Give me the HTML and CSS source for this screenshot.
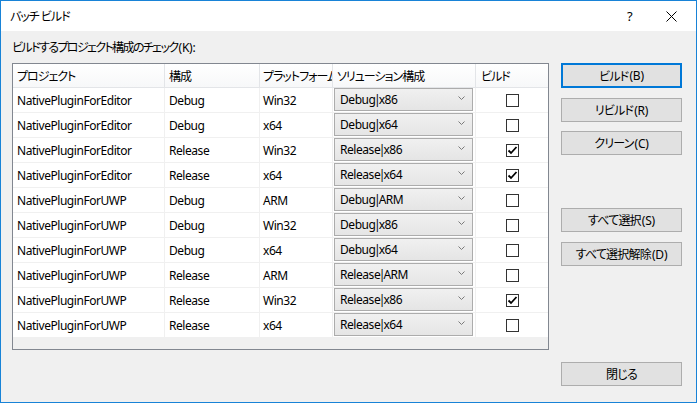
FILE: index.html
```html
<!DOCTYPE html>
<html lang="ja">
<head>
<meta charset="utf-8">
<link rel="stylesheet" href="styles.css">
</head>
<body>
<div class="window">
  <div class="titlebar">
    <span class="title">バッチ ビルド</span>
    <span class="help">?</span>
    <span class="close"><svg width="11" height="11" viewBox="0 0 11 11"><path d="M0.5 0.5 L10.5 10.5 M10.5 0.5 L0.5 10.5" stroke="#000" stroke-width="1" fill="none"/></svg></span>
  </div>
  <div class="content">
    <div class="left">
      <div class="label">ビルドするプロジェクト構成のチェック<span class="lat">(K):</span></div>
      <div class="grid">
        <div class="row head">
          <div class="c c1">プロジェクト</div>
          <div class="c c2">構成</div>
          <div class="c c3">プラットフォーム</div>
          <div class="c c4">ソリューション構成</div>
          <div class="c c5">ビルド</div>
        </div>
        <div class="row">
          <div class="c c1">NativePluginForEditor</div><div class="c c2">Debug</div><div class="c c3">Win32</div>
          <div class="c c4"><div class="combo"><span>Debug<i>|</i>x86</span><svg class="chev" width="7" height="4" viewBox="0 0 7 4"><path d="M0.5 0.5 L3.5 3.5 L6.5 0.5" stroke="#7a7a7a" fill="none"/></svg></div></div>
          <div class="c c5"><span class="cb"></span></div>
        </div>
        <div class="row">
          <div class="c c1">NativePluginForEditor</div><div class="c c2">Debug</div><div class="c c3">x64</div>
          <div class="c c4"><div class="combo"><span>Debug<i>|</i>x64</span><svg class="chev" width="7" height="4" viewBox="0 0 7 4"><path d="M0.5 0.5 L3.5 3.5 L6.5 0.5" stroke="#7a7a7a" fill="none"/></svg></div></div>
          <div class="c c5"><span class="cb"></span></div>
        </div>
        <div class="row">
          <div class="c c1">NativePluginForEditor</div><div class="c c2">Release</div><div class="c c3">Win32</div>
          <div class="c c4"><div class="combo"><span>Release<i>|</i>x86</span><svg class="chev" width="7" height="4" viewBox="0 0 7 4"><path d="M0.5 0.5 L3.5 3.5 L6.5 0.5" stroke="#7a7a7a" fill="none"/></svg></div></div>
          <div class="c c5"><span class="cb"><svg width="11" height="11" viewBox="0 0 11 11"><path d="M1.5 5.5 L4 8 L9.5 2" stroke="#000" stroke-width="1.8" fill="none"/></svg></span></div>
        </div>
        <div class="row">
          <div class="c c1">NativePluginForEditor</div><div class="c c2">Release</div><div class="c c3">x64</div>
          <div class="c c4"><div class="combo"><span>Release<i>|</i>x64</span><svg class="chev" width="7" height="4" viewBox="0 0 7 4"><path d="M0.5 0.5 L3.5 3.5 L6.5 0.5" stroke="#7a7a7a" fill="none"/></svg></div></div>
          <div class="c c5"><span class="cb"><svg width="11" height="11" viewBox="0 0 11 11"><path d="M1.5 5.5 L4 8 L9.5 2" stroke="#000" stroke-width="1.8" fill="none"/></svg></span></div>
        </div>
        <div class="row">
          <div class="c c1">NativePluginForUWP</div><div class="c c2">Debug</div><div class="c c3">ARM</div>
          <div class="c c4"><div class="combo"><span>Debug<i>|</i>ARM</span><svg class="chev" width="7" height="4" viewBox="0 0 7 4"><path d="M0.5 0.5 L3.5 3.5 L6.5 0.5" stroke="#7a7a7a" fill="none"/></svg></div></div>
          <div class="c c5"><span class="cb"></span></div>
        </div>
        <div class="row">
          <div class="c c1">NativePluginForUWP</div><div class="c c2">Debug</div><div class="c c3">Win32</div>
          <div class="c c4"><div class="combo"><span>Debug<i>|</i>x86</span><svg class="chev" width="7" height="4" viewBox="0 0 7 4"><path d="M0.5 0.5 L3.5 3.5 L6.5 0.5" stroke="#7a7a7a" fill="none"/></svg></div></div>
          <div class="c c5"><span class="cb"></span></div>
        </div>
        <div class="row">
          <div class="c c1">NativePluginForUWP</div><div class="c c2">Debug</div><div class="c c3">x64</div>
          <div class="c c4"><div class="combo"><span>Debug<i>|</i>x64</span><svg class="chev" width="7" height="4" viewBox="0 0 7 4"><path d="M0.5 0.5 L3.5 3.5 L6.5 0.5" stroke="#7a7a7a" fill="none"/></svg></div></div>
          <div class="c c5"><span class="cb"></span></div>
        </div>
        <div class="row">
          <div class="c c1">NativePluginForUWP</div><div class="c c2">Release</div><div class="c c3">ARM</div>
          <div class="c c4"><div class="combo"><span>Release<i>|</i>ARM</span><svg class="chev" width="7" height="4" viewBox="0 0 7 4"><path d="M0.5 0.5 L3.5 3.5 L6.5 0.5" stroke="#7a7a7a" fill="none"/></svg></div></div>
          <div class="c c5"><span class="cb"></span></div>
        </div>
        <div class="row">
          <div class="c c1">NativePluginForUWP</div><div class="c c2">Release</div><div class="c c3">Win32</div>
          <div class="c c4"><div class="combo"><span>Release<i>|</i>x86</span><svg class="chev" width="7" height="4" viewBox="0 0 7 4"><path d="M0.5 0.5 L3.5 3.5 L6.5 0.5" stroke="#7a7a7a" fill="none"/></svg></div></div>
          <div class="c c5"><span class="cb"><svg width="11" height="11" viewBox="0 0 11 11"><path d="M1.5 5.5 L4 8 L9.5 2" stroke="#000" stroke-width="1.8" fill="none"/></svg></span></div>
        </div>
        <div class="row">
          <div class="c c1">NativePluginForUWP</div><div class="c c2">Release</div><div class="c c3">x64</div>
          <div class="c c4"><div class="combo"><span>Release<i>|</i>x64</span><svg class="chev" width="7" height="4" viewBox="0 0 7 4"><path d="M0.5 0.5 L3.5 3.5 L6.5 0.5" stroke="#7a7a7a" fill="none"/></svg></div></div>
          <div class="c c5"><span class="cb"></span></div>
        </div>
      </div>
    </div>
    <div class="buttons">
      <button class="btn focus">ビルド<span class="lat">(B)</span></button>
      <button class="btn b-rebuild">リビルド<span class="lat">(R)</span></button>
      <button class="btn b-clean">クリーン<span class="lat">(C)</span></button>
      <button class="btn b-all">すべて選択<span class="lat">(S)</span></button>
      <button class="btn b-none">すべて選択解除<span class="lat">(D)</span></button>
      <button class="btn b-close">閉じる</button>
    </div>
  </div>
</div>
</body>
</html>
```

FILE: styles.css
```css
* { box-sizing: border-box; }
html, body { margin: 0; padding: 0; }
body {
  width: 697px;
  height: 403px;
  overflow: hidden;
  font-family: "Noto Sans", "Noto Sans CJK JP", sans-serif;
  font-size: 12px;
  color: #000;
  font-feature-settings: "palt";
}
.window {
  width: 697px;
  height: 403px;
  border: 1px solid #1883d7;
  background: #f0f0f0;
  display: flex;
  flex-direction: column;
}
.titlebar {
  height: 30px;
  background: #fff;
  display: flex;
  align-items: center;
  padding-left: 9px;
}
.title { flex: 1; font-size: 12px; letter-spacing: -1px; }
.help { width: 14px; margin-right: 25px; font-size: 13px; }
.close { width: 11px; height: 11px; margin-right: 19px; display: flex; }
.content {
  flex: 1;
  display: flex;
  padding: 9px 14px 0 11px;
  gap: 12px;
}
.left { width: 537px; display: flex; flex-direction: column; }
.label { height: 16px; line-height: 16px; margin-bottom: 7px; letter-spacing: -1.6px; }
.lat { letter-spacing: -0.2px; }
.label .lat { margin-left: 1px; }
.grid {
  height: 287px;
  border: 1px solid #828790;
  background: #f0f0f0;
  display: flex;
  flex-direction: column;
}
.row {
  display: flex;
  height: 25px;
  background: #fff;
  border-bottom: 1px solid #f0f0f0;
  letter-spacing: -0.45px;
}
.row.head {
  height: 24px;
  background: linear-gradient(#fff, #f7f8f9);
  border-bottom: 1px solid #e3e5e8;
  letter-spacing: -1px;
}
.c {
  display: flex;
  align-items: center;
  padding-left: 4px;
  white-space: nowrap;
  overflow: hidden;
  border-right: 1px solid #f0f0f0;
}
.head .c { border-right: 1px solid #e3e5e8; }
.c1 { width: 152px; }
.c2 { width: 95px; }
.c3 { width: 73px; padding-left: 3px; }
.c4 { width: 143px; padding-left: 1px; align-items: flex-start; }
.head .c4 { align-items: center; padding-left: 4px; }
.c5 { width: 72px; border-right: none; justify-content: center; padding-left: 0; }
.head .c5 { justify-content: flex-start; padding-left: 5px; border-right: none; }
.combo {
  width: 139px;
  height: 23px;
  border: 1px solid #acacac;
  background: linear-gradient(#f0f0f0, #e5e5e5);
  display: flex;
  align-items: center;
  justify-content: space-between;
  padding: 0 7px 0 5px;
}
.combo i { font-style: normal; margin: 0 -1.5px; }
.chev { display: block; margin-top: -3px; }
.cb {
  width: 13px;
  height: 13px;
  border: 1px solid #333;
  background: #fff;
  display: flex;
  align-items: center;
  justify-content: center;
}
.buttons {
  width: 122px;
  display: flex;
  flex-direction: column;
  padding-top: 23px;
}
.btn {
  font: inherit;
  color: #000;
  height: 24px;
  padding: 0;
  background: #e1e1e1;
  border: 1px solid #adadad;
  border-radius: 0;
  display: flex;
  align-items: center;
  justify-content: center;
  letter-spacing: -0.8px;
}
.btn .lat { margin-left: 1px; }
.btn.focus { height: 25px; border: 2px solid #0078d7; }
.b-rebuild { margin-top: 10px; }
.b-clean { margin-top: 9px; }
.b-all { margin-top: 53px; }
.b-none { margin-top: 10px; }
.b-close { margin-top: 96px; }
```
